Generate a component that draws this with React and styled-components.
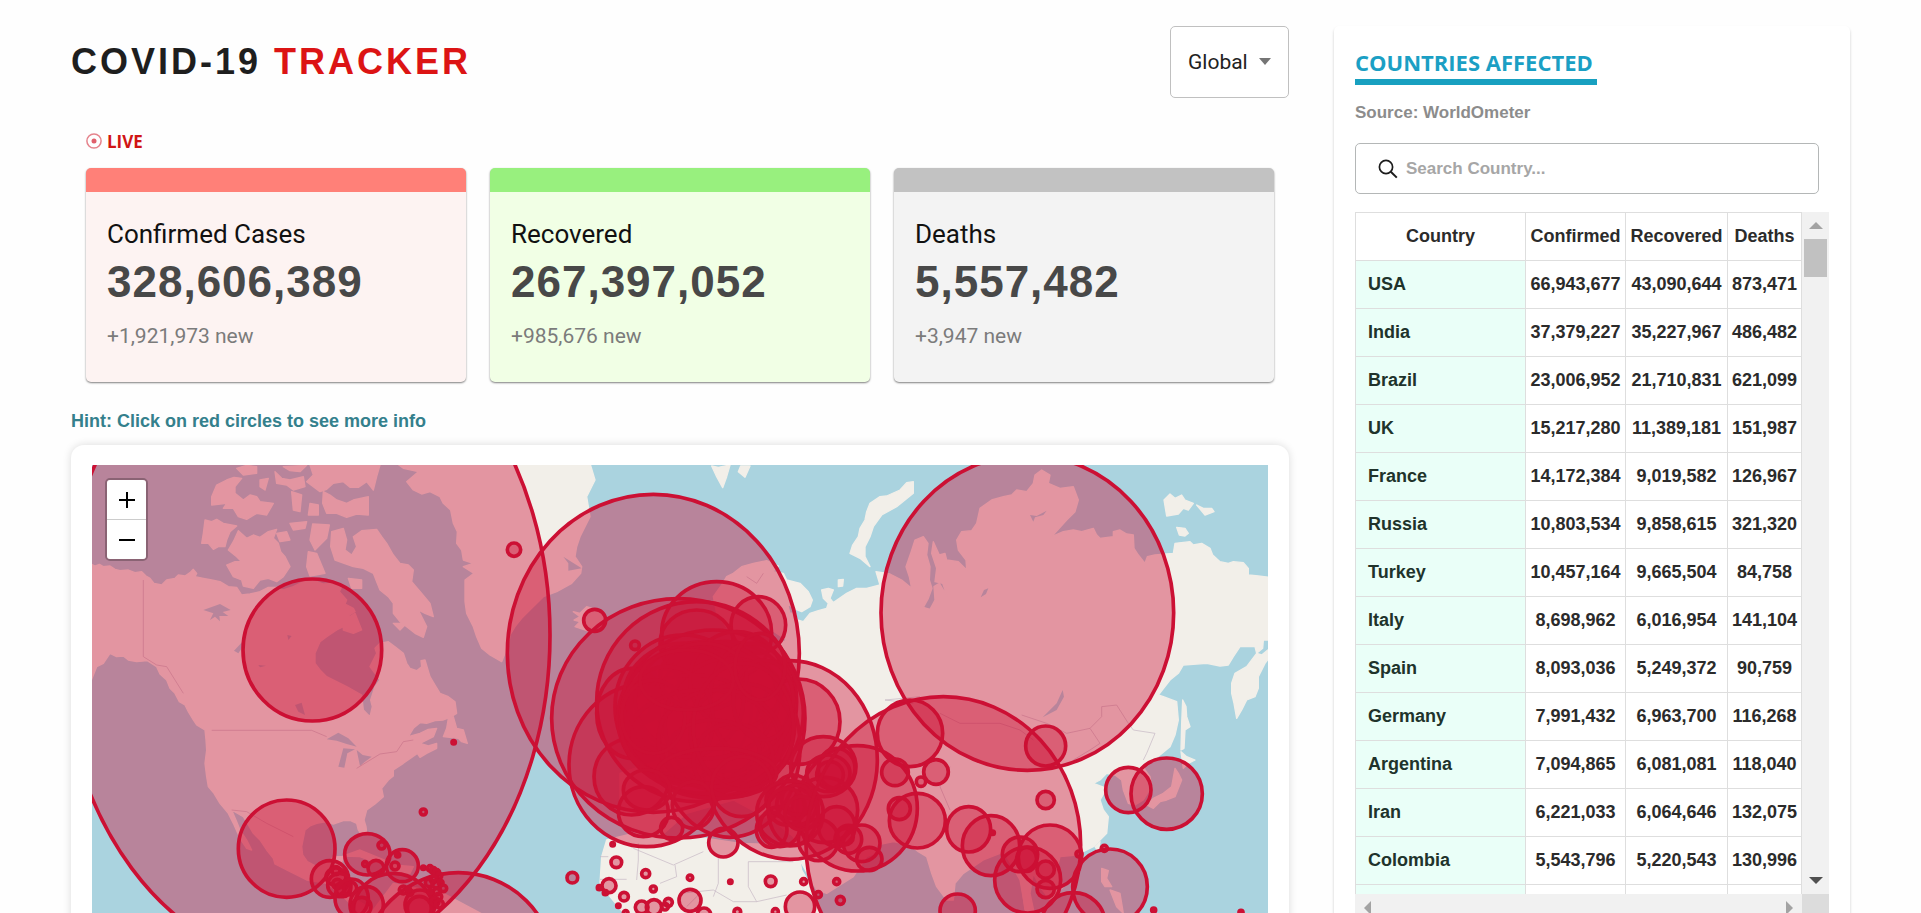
import React, { useState } from "react";
import styled, { createGlobalStyle } from "styled-components";

const GlobalStyle = createGlobalStyle`
  * { box-sizing: border-box; }
  body {
    margin: 0;
    background: #fefefe;
    color: #222;
    font-family: "Liberation Sans", Arial, sans-serif;
  }
  h1, h2, h3, p { margin: 0; }
`;

const Page = styled.div`
  display: flex;
  gap: 45px;
  height: 100vh;
  overflow: hidden;
  padding: 26px 71px 0;
`;

const Main = styled.main`
  flex: 1;
  min-width: 0;
`;

const Header = styled.header`
  display: flex;
  align-items: center;
  justify-content: space-between;
  height: 72px;
`;

const Title = styled.h1`
  font-size: 36px;
  line-height: 40px;
  letter-spacing: 3px;
  color: #1e1e1e;
  span { color: #dc1414; }
`;

const RegionPicker = styled.label`
  position: relative;
  display: block;
  svg {
    position: absolute;
    top: 32px;
    right: 18px;
    pointer-events: none;
  }
`;

const RegionSelect = styled.select`
  appearance: none;
  width: 119px;
  height: 72px;
  padding: 0 17px;
  border: 1px solid #c0c0c0;
  border-radius: 5px;
  background: #fff;
  color: #222;
  font: 21px/24px Roboto, sans-serif;
`;

const Live = styled.div`
  display: flex;
  align-items: center;
  gap: 5px;
  height: 24px;
  margin: 32px 15px 14px;
  color: #d01515;
  font: bold 17px/24px "Open Sans", sans-serif;
`;

const Cards = styled.div`
  display: grid;
  grid-template-columns: repeat(3, 1fr);
  gap: 24px;
  padding: 0 15px;
`;

const Card = styled.section`
  height: 214px;
  padding: 24px 21px 0;
  border-top: 24px solid ${(p) => p.$accent};
  border-radius: 5px;
  background: ${(p) => p.$tint};
  box-shadow: 0 1px 2px rgba(0, 0, 0, 0.5);
`;

const CardTitle = styled.h2`
  font: 400 26px/36px Roboto, sans-serif;
  color: #111;
`;

const CardValue = styled.p`
  font-size: 44px;
  font-weight: bold;
  line-height: 60px;
  letter-spacing: 1px;
  color: #484848;
`;

const CardDelta = styled.p`
  margin-top: 12px;
  font: 21px/24px Roboto, sans-serif;
  color: #7b7b7b;
`;

const Hint = styled.p`
  margin: 28px 0 13px;
  font-size: 18px;
  font-weight: bold;
  line-height: 22px;
  color: #34808c;
`;

const MapCard = styled.section`
  height: 620px;
  padding: 20px 21px;
  border-radius: 13px;
  background: #fff;
  box-shadow: 0 0 8px rgba(0, 0, 0, 0.14);
`;

const MapFrame = styled.div`
  position: relative;
  height: 100%;
  overflow: hidden;
  background: #aad3df;
`;

const WorldSvg = styled.svg`
  display: block;
  width: 100%;
  height: 100%;
`;

const ZoomControl = styled.div`
  position: absolute;
  top: 13px;
  left: 13px;
  display: flex;
  flex-direction: column;
  border: 2px solid rgba(0, 0, 0, 0.25);
  border-radius: 5px;
  background-clip: padding-box;
`;

const ZoomButton = styled.button`
  display: grid;
  place-items: center;
  width: 39px;
  height: 39px;
  padding: 0;
  border: 0;
  background: #fff;
  &:first-child {
    height: 40px;
    border-bottom: 1px solid #ccc;
    border-radius: 3px 3px 0 0;
  }
  &:last-child { border-radius: 0 0 3px 3px; }
`;

const Sidebar = styled.aside`
  width: 516px;
  flex: none;
  height: 1000px;
  padding: 20px 21px 0;
  border-radius: 5px;
  background: #fff;
  box-shadow: 0 2px 3px rgba(0, 0, 0, 0.2);
`;

const SidebarTitle = styled.h2`
  width: max-content;
  padding-right: 4px;
  border-bottom: 6px solid #18a0c0;
  color: #1b9fc4;
  font: bold 22px/33px "Open Sans", sans-serif;
`;

const Source = styled.p`
  margin: 17px 0 19px;
  color: #8c8c8c;
  font-size: 17px;
  font-weight: bold;
  line-height: 22px;
`;

const SearchBox = styled.label`
  display: flex;
  align-items: center;
  gap: 6px;
  height: 51px;
  margin-right: 10px;
  padding: 0 22px;
  border: 1px solid #b4b7b7;
  border-radius: 5px;
`;

const SearchInput = styled.input`
  flex: 1;
  min-width: 0;
  border: 0;
  outline: 0;
  background: transparent;
  color: #222;
  font: bold 17px/24px "Liberation Sans", Arial, sans-serif;
  &::placeholder { color: #a6a6a6; }
`;

const ScrollArea = styled.div`
  display: grid;
  grid-template-columns: 1fr 27px;
  grid-template-rows: 682px 27px;
  margin-top: 18px;
`;

const TableViewport = styled.div`
  overflow: hidden;
`;

const Table = styled.table`
  width: 100%;
  border-collapse: collapse;
  table-layout: fixed;
  color: #2b2b2b;
  font-size: 18px;
  font-weight: bold;
  text-align: center;
  th, td {
    height: 48px;
    padding: 0;
    border: 1px solid #dedede;
  }
`;

const Column = styled.col`
  width: ${(p) => p.$width};
`;

const CountryCell = styled.td`
  && { padding-left: 12px; }
  background: #eafff8;
  color: #20332b;
  text-align: left;
`;

const VerticalBar = styled.div`
  display: flex;
  flex-direction: column;
  padding: 0 1px;
  background: #f1f1f1;
`;

const HorizontalBar = styled.div`
  display: flex;
  justify-content: space-between;
  background: #f1f1f1;
`;

const ScrollButton = styled.button`
  display: grid;
  place-items: center;
  width: 25px;
  height: 27px;
  padding: 0;
  border: 0;
  background: transparent;
  color: ${(p) => (p.$active ? "#505050" : "#a3a3a3")};
`;

const Thumb = styled.div`
  width: 23px;
  height: 38px;
  margin: 0 1px auto;
  background: #c1c1c1;
`;

const Corner = styled.div`
  background: #dcdcdc;
`;

const STATS = [
  { title: "Confirmed Cases", value: "328,606,389", delta: "+1,921,973 new", accent: "#ff8078", tint: "#fdf3f2" },
  { title: "Recovered", value: "267,397,052", delta: "+985,676 new", accent: "#98f07e", tint: "#f1ffe5" },
  { title: "Deaths", value: "5,557,482", delta: "+3,947 new", accent: "#c2c2c2", tint: "#f3f3f3" },
];

const COUNTRIES = [
  ["USA", "66,943,677", "43,090,644", "873,471"],
  ["India", "37,379,227", "35,227,967", "486,482"],
  ["Brazil", "23,006,952", "21,710,831", "621,099"],
  ["UK", "15,217,280", "11,389,181", "151,987"],
  ["France", "14,172,384", "9,019,582", "126,967"],
  ["Russia", "10,803,534", "9,858,615", "321,320"],
  ["Turkey", "10,457,164", "9,665,504", "84,758"],
  ["Italy", "8,698,962", "6,016,954", "141,104"],
  ["Spain", "8,093,036", "5,249,372", "90,759"],
  ["Germany", "7,991,432", "6,963,700", "116,268"],
  ["Argentina", "7,094,865", "6,081,081", "118,040"],
  ["Iran", "6,221,033", "6,064,646", "132,075"],
  ["Colombia", "5,543,796", "5,220,543", "130,996"],
  ["", "", "", ""],
];

// Each map region has its own drawing origin; circles are [cx, cy, rx, ry?].
const AMERICAS = {
  origin: "translate(-96 -195)",
  land: [
    "M90 490 105 498 118 493 130 500 150 498 165 508 180 512 205 510 225 518 245 515 258 528 270 535 282 550 305 555 320 540 345 535 355 525 375 528 390 518 400 508 410 520 405 530 430 535 455 540 480 545 505 560 530 562 545 585 570 582 600 575 625 562 650 562 670 570 700 560 730 545 760 540 790 552 830 550 845 560 838 575 860 600 855 612 880 625 885 635 850 655 850 680 830 690 800 710 780 725 765 760 765 790 780 810 800 830 830 845 860 860 905 885 910 930 930 950 937 920 932 900 945 860 960 840 945 820 930 800 950 760 945 745 960 730 985 725 1005 740 1030 760 1040 790 1050 805 1070 812 1085 800 1083 782 1095 780 1110 830 1125 855 1140 880 1165 890 1185 905 1190 940 1170 952 1150 960 1125 962 1100 970 1080 968 1060 985 1045 1010 1080 1000 1105 988 1130 985 1120 1010 1080 1030 1105 1038 1130 1030 1130 1045 1100 1060 1080 1072 1072 1060 1055 1072 1030 1090 1015 1100 1000 1110 1000 1128 985 1140 965 1165 970 1190 945 1212 920 1230 912 1260 918 1280 920 1298 905 1305 895 1290 890 1270 872 1262 850 1262 820 1272 800 1265 770 1270 750 1278 735 1290 725 1340 728 1365 742 1385 770 1400 800 1390 820 1370 850 1370 835 1420 880 1440 890 1500 940 1530 1000 1450 1150 1480 1300 1560 920 1560 860 1500 800 1450 740 1440 680 1410 645 1392 640 1375 620 1350 600 1320 580 1300 565 1275 550 1250 515 1230 530 1265 540 1290 560 1320 575 1350 560 1345 540 1315 520 1270 505 1240 480 1210 462 1180 445 1160 440 1130 435 1090 440 1050 438 1020 435 990 410 975 400 960 385 935 375 915 358 905 345 880 330 865 320 840 300 822 290 800 262 782 230 785 205 780 190 768 170 770 150 760 140 775 130 790 110 800 90 850Z",
    "M435 360 455 365 470 358 490 370 530 378 510 395 500 420 495 440 475 440 460 448 445 430 425 430 430 400Z",
    "M535 392 560 415 580 405 600 412 625 395 650 388 640 415 655 430 662 455 675 470 690 500 670 530 650 545 625 535 600 540 580 565 550 558 545 540 520 530 500 495 525 485 545 485 530 470 505 450 520 425Z",
    "M455 290 470 255 500 240 522 232 545 235 525 260 525 280 550 300 570 285 590 290 600 305 640 310 620 345 590 340 560 358 535 350 520 325 490 325 500 310 455 315Z",
    "M530 205 560 196 590 200 590 220 550 225ZM600 240 625 235 615 270 600 260ZM645 215 665 235 690 240 730 230 735 260 700 270 680 255 650 250ZM670 200 740 196 720 215 690 212ZM695 275 725 285 720 335 700 330Z",
    "M750 195 960 195 950 230 940 270 920 245 895 262 870 262 850 245 820 250 800 268 780 275 740 245 760 225Z",
    "M790 275 810 285 830 300 860 310 880 300 925 290 925 345 890 342 860 352 830 340 800 340 788 310ZM750 310 775 315 775 345 745 345ZM690 370 740 365 735 385 700 390Z",
    "M650 400 680 395 690 420 660 425ZM758 372 808 375 800 415 765 450 750 420ZM745 455 770 460 795 520 750 528 740 500Z",
    "M815 395 850 385 860 420 855 450 875 465 890 440 880 410 905 392 950 388 965 410 980 430 1000 465 1020 490 1045 495 1060 510 1055 545 1085 580 1110 610 1120 650 1095 640 1075 630 1100 680 1090 712 1065 700 1040 680 1020 665 1000 640 1000 610 985 590 960 570 950 545 940 520 910 505 880 500 825 480 812 440Z",
    "M865 535 905 540 905 565 875 565ZM850 630 870 650 885 640 905 690 880 700 850 690ZM1000 670 1040 670 1020 690ZM1165 955 1180 950 1190 985 1210 990 1222 1030 1205 1025 1195 1015 1150 1010 1160 985Z",
    "M1010 190 1030 205 1075 215 1040 245 1060 270 1085 282 1110 275 1140 290 1150 310 1172 330 1180 370 1192 395 1190 430 1205 450 1210 480 1240 490 1210 500 1242 520 1215 540 1215 570 1215 605 1220 640 1240 680 1250 710 1265 745 1290 765 1325 785 1335 760 1345 740 1350 705 1365 680 1385 655 1400 640 1450 590 1490 575 1535 550 1562 520 1565 500 1545 470 1550 440 1560 410 1590 350 1580 290 1605 240 1590 190Z",
    "M850 1368 900 1350 985 1385 940 1385 900 1370ZM1000 1395 1060 1400 1050 1420 1000 1415Z",
  ],
  water: [
    "M430 630 480 612 512 630 488 636 505 648 478 648 480 664 465 650 450 660 460 640Z",
    "M800 1018 835 998 865 1015 890 1040 860 1032 830 1022ZM850 1045 835 1100 853 1103 862 1060 885 1048ZM890 1050 908 1065 935 1070 915 1085 900 1098Z",
    "M522 752 560 712 552 735 535 760ZM705 915 725 908 735 945 715 935ZM682 705 695 708 685 720ZM595 795 618 797 600 802Z",
  ],
  borders: "M250 540V770L290 795 320 800 370 880M455 991H755L800 1010M890 1105 960 1062 1010 1055 1030 1025 1060 1020M515 1230 560 1235 620 1270 700 1310",
  cases: [
    [735, 705, 735, 990], [757, 750, 208, 213], [680, 1346, 145, 146], [1362, 449, 20], [1181, 1027, 5], [1090, 1236, 9],
    [922, 1363, 68, 62], [965, 1336, 11], [1027, 1397, 48], [1013, 1365, 6], [1005, 1398, 12], [948, 1405, 24], [915, 1392, 7],
    [810, 1437, 56, 55], [828, 1412, 12], [828, 1430, 30, 26], [838, 1455, 35], [850, 1468, 22], [870, 1465, 20], [832, 1452, 14],
    [875, 1495, 50, 58], [920, 1515, 50, 55], [1195, 1707, 289], [1000, 1535, 120, 115], [905, 1520, 28], [1080, 1515, 45], [1078, 1525, 36],
    [1090, 1403, 5], [1110, 1405, 8], [1120, 1412, 9], [1130, 1418, 9], [1137, 1428, 8], [1120, 1438, 10], [1108, 1448, 12], [1128, 1452, 12],
    [1142, 1448, 7], [1150, 1465, 10], [1130, 1475, 10], [1135, 1490, 10], [1125, 1505, 12], [1110, 1475, 6], [1138, 1512, 12],
    [1030, 1470, 12], [1050, 1478, 8], [1045, 1468, 6],
  ],
};

const EUROPE = {
  origin: "translate(1224 -75)",
  land: [
    "M220 515 240 520 260 500 290 510 320 540 300 560 270 575 225 560 240 545 222 540 240 530ZM635 78 655 82 690 75 680 110 668 143 650 110ZM715 95 722 78 750 78 735 112Z",
    "M1200 150 1160 168 1140 170 1110 190 1100 215 1095 240 1080 265 1075 290 1058 315 1050 340 1080 355 1110 380 1095 350 1095 320 1110 290 1120 260 1145 225 1190 200 1240 160 1240 125 1220 128Z",
    "M640 470 665 435 680 410 700 400 725 380 760 370 800 362 835 378 818 395 850 400 860 420 900 430 925 455 937 480 930 500 905 515 880 505 862 490 870 520 885 518 892 540 910 545 930 520 955 512 980 505 985 490 970 475 965 450 985 445 1000 450 990 475 1000 488 1040 460 1070 445 1100 445 1140 435 1128 395 1170 402 1205 420 1235 445 1228 410 1218 380 1232 340 1245 300 1270 290 1284 310 1280 345 1290 380 1288 420 1296 445 1285 475 1270 502 1290 508 1305 480 1302 440 1318 430 1342 470 1328 430 1305 425 1310 385 1295 340 1300 305 1318 345 1335 340 1340 360 1375 365 1400 390 1398 360 1375 330 1370 300 1385 275 1415 272 1430 250 1440 205 1475 180 1510 170 1535 165 1550 150 1580 155 1600 130 1605 105 1625 90 1650 105 1645 130 1680 145 1720 140 1735 180 1725 215 1700 240 1655 290 1690 275 1720 270 1745 275 1780 265 1790 285 1800 295 1840 290 1840 275 1860 270 1880 282 1900 285 1902 325 1915 345 1935 370 1942 350 1965 345 2020 340 2025 310 2070 305 2080 315 2105 310 2130 325 2138 345 2160 365 2185 370 2200 365 2230 368 2245 385 2245 405 2275 408 2310 412V600L2290 600 2288 625 2270 640 2265 620 2220 620 2200 650 2185 675 2160 678 2120 670 2050 675 2035 700 2010 720 1975 765 1990 770 2030 785 2035 840 2025 885 2010 920 1980 945 1950 965 1930 975 1935 990 1950 1010 1955 1040 1930 1080 1905 1095 1885 1090 1870 1050 1865 1020 1845 1005 1820 1000 1800 1020 1780 1030 1820 1045 1800 1080 1810 1110 1825 1130 1820 1180 1780 1220 1730 1245 1680 1250 1670 1290 1690 1340 1650 1380 1620 1340 1600 1300 1590 1360 1605 1430H1580L1560 1320 1520 1250 1500 1240 1450 1260 1390 1300 1365 1330 1360 1380 1340 1380 1310 1340 1295 1300 1280 1250 1255 1235 1230 1215 1180 1205 1130 1215 1125 1240 1100 1250 1060 1310 980 1360 950 1350 905 1270 880 1190 830 1150 700 1080 560 1120 480 1190 360 1150 360 1000 480 960 430 860 560 800 640 700 700 660 780 640 860 600 800 560 720 620 650 520Z",
    "M470 690 520 700 560 820 470 830 490 760ZM410 760 450 760 440 820 400 820Z",
    "M320 1200 400 1180 500 1190 620 1195 720 1210 850 1215 890 1215 905 1290 940 1350 970 1430H380L330 1370 300 1330 305 1250Z",
    "M1015 420 1030 418 1028 438 1015 440Z",
  ],
  water: ["M190 350 245 385 205 392 205 370Z"],
  borders: "M300 1250H325M300 1318H380M415 1210V1260L410 1320M400 1225 520 1275 610 1235M525 1275 530 1310 480 1330M655 1250V1330L640 1370M745 1265V1340M745 1265H880M745 1340 770 1385 860 1365M540 1360 640 1350 700 1385 770 1385M560 1400 600 1360M740 410 770 430 790 400M1155 780 1240 790",
  cases: [
    [460, 640, 438, 477], [535, 835, 380, 359], [590, 785, 300, 300], [440, 975, 233, 245], [395, 1010, 113, 115], [395, 820, 105, 135],
    [650, 580, 165, 155], [775, 555, 82, 85], [590, 610, 110, 100], [284, 541, 33], [405, 616, 13],
    [870, 960, 262, 298], [895, 845, 125, 128], [1072, 1105, 180, 188], [640, 820, 270, 250], [690, 920, 210, 272], [550, 800, 205, 215],
    [615, 835, 262, 225], [680, 800, 205, 195], [690, 850, 195, 195], [580, 870, 215, 165], [620, 780, 215, 175], [710, 720, 140, 145],
    [725, 880, 155, 150], [610, 890, 225, 140], [550, 780, 180, 170], [660, 900, 185, 150], [755, 780, 125, 170], [610, 710, 130, 100],
    [500, 840, 140, 160], [700, 960, 120, 110], [790, 780, 90, 120], [640, 940, 140, 100], [460, 830, 95, 110], [730, 860, 150, 190],
    [560, 720, 140, 90], [780, 680, 75, 100], [650, 1000, 180, 75],
    [430, 1115, 75, 75], [515, 1165, 33], [580, 1095, 63, 70], [440, 1050, 70, 60], [725, 1040, 90, 90],
    [970, 980, 98, 90], [1010, 985, 55, 60], [990, 1005, 40], [985, 1000, 65, 55], [975, 1110, 98], [1010, 1160, 55, 60], [1045, 1198, 40, 42],
    [1085, 1210, 55], [1108, 1257, 38, 35], [1035, 1190, 25], [955, 1200, 60, 62],
    [870, 1080, 72, 55], [880, 1110, 75, 105], [870, 1120, 100, 98], [815, 1170, 46, 52], [840, 1160, 60], [890, 1095, 60], [890, 1080, 45],
    [860, 1100, 55], [905, 1120, 50], [670, 1208, 44, 43],
    [338, 1213, 5], [349, 1267, 16], [217, 1313, 16], [437, 1301, 12], [570, 1313, 8], [691, 1325, 5], [812, 1324, 16], [911, 1325, 9],
    [1010, 1325, 9], [1021, 1381, 12], [955, 1364, 9], [460, 1347, 9], [327, 1337, 21], [298, 1343, 6], [316, 1358, 6], [372, 1370, 13],
    [355, 1397, 5], [570, 1381, 33], [425, 1402, 19], [462, 1402, 23], [505, 1387, 12], [495, 1400, 10], [612, 1424, 20], [900, 1400, 44],
    [712, 1415, 10], [826, 1415, 9], [377, 1419, 7],
  ],
};

const ASIA = {
  origin: "translate(2304 -75)",
  land: [
    "M912 180 930 162 945 175 965 165 975 180 1000 190 985 210 970 205 955 222 920 228ZM1010 195 1030 205 1055 205 1062 215 1035 225ZM950 262 975 265 985 280 975 288 958 285Z",
    "M1230 625 1205 645 1190 640 1160 680 1125 700 1115 730 1115 760 1122 790 1130 835 1145 810 1160 780 1185 770 1195 745 1195 710 1215 670 1230 650ZM968 780 978 800 980 830 990 860 975 870 972 925 963 930 965 850Z",
    "M963 935 980 950 1005 960 985 970 970 985ZM945 985 955 1000 965 1020 945 1070 920 1080 900 1085 880 1105 860 1095 880 1075 910 1060 935 1040Z",
    "M725 1285 745 1292 740 1315 755 1340 735 1340 725 1325ZM750 1350 780 1360 790 1420 770 1400ZM480 1300 500 1310 515 1410 495 1410ZM705 1220 720 1205 715 1235Z",
  ],
  water: ["M608 750 612 770 590 810 548 832 590 790ZM510 225 530 228 560 212 550 225 525 232 520 245ZM362 472 372 450 385 445 378 462Z"],
  borders: "M240 820 300 850 350 850 420 850 480 870 520 900M485 825 560 850 620 880 690 865 720 910 690 930 640 960M690 865 725 830V800L770 795 805 850 820 870 885 880 860 940 850 960M270 980 240 1040 270 1110M75 780 180 770",
  cases: [
    [250, 1215, 412, 445], [502, 518, 439, 473], [150, 880, 98, 100], [557, 918, 60], [105, 997, 40], [228, 996, 37],
    [183, 1025, 14], [557, 1080, 26], [172, 1142, 84, 82], [118, 1106, 33], [326, 1168, 66, 68], [393, 1217, 86, 90], [398, 1178, 5],
    [570, 1250, 95, 95], [480, 1243, 53, 52], [500, 1258, 30, 36], [503, 1320, 99], [557, 1289, 26], [557, 1347, 26], [293, 1412, 53, 50],
    [750, 1340, 112, 113], [733, 1225, 9], [657, 1242, 9], [640, 1450, 95, 92], [805, 1050, 68], [920, 1061, 107], [881, 1410, 6], [1143, 1417, 6],
  ],
};

const REGIONS = [AMERICAS, EUROPE, ASIA];

function WorldMap() {
  return (
    <WorldSvg viewBox="0 0 3528 1740" preserveAspectRatio="xMinYMin slice" role="img" aria-label="Cases by country">
      {REGIONS.map((r) => (
        <g key={r.origin} transform={r.origin}>
          <g fill="#f2efe9" stroke="#f2efe9" strokeWidth="4" strokeLinejoin="round">
            {r.land.map((d) => <path key={d} d={d} />)}
          </g>
          <g fill="#aad3df">{r.water.map((d) => <path key={d} d={d} />)}</g>
          <path d={r.borders} fill="none" stroke="#c4b5c2" strokeWidth="2" />
        </g>
      ))}
      {REGIONS.map((r) => (
        <g key={r.origin} transform={r.origin} fill="#cc1034" fillOpacity=".4" stroke="#cc1034" strokeWidth="11">
          {r.cases.map(([cx, cy, rx, ry = rx], i) => <ellipse key={i} cx={cx} cy={cy} rx={rx} ry={ry} />)}
        </g>
      ))}
    </WorldSvg>
  );
}

const ARROWS = { up: "M0 9 9 0 18 9Z", down: "M0 0 9 9 18 0Z", left: "M9 0 0 9 9 18Z", right: "M0 0 9 9 0 18Z" };

function Arrow({ dir }) {
  const tall = dir === "left" || dir === "right";
  return (
    <svg width={tall ? 7 : 14} height={tall ? 14 : 7} viewBox={tall ? "0 0 9 18" : "0 0 18 9"} aria-hidden="true">
      <path d={ARROWS[dir]} fill="currentColor" />
    </svg>
  );
}

export default function App() {
  const [query, setQuery] = useState("");
  const rows = COUNTRIES.filter(([name]) => name.toLowerCase().includes(query.toLowerCase()));

  return (
    <>
      <GlobalStyle />
      <Page>
        <Main>
          <Header>
            <Title>COVID-19 <span>TRACKER</span></Title>
            <RegionPicker>
              <RegionSelect aria-label="Region" defaultValue="Global">
                <option>Global</option>
              </RegionSelect>
              <svg width="12" height="7" viewBox="0 0 12 7" aria-hidden="true"><path d="M0 0h12L6 7z" fill="#757575" /></svg>
            </RegionPicker>
          </Header>

          <Live>
            <svg width="16" height="18" viewBox="0 0 16 18" aria-hidden="true">
              <circle cx="8" cy="8" r="7.1" fill="none" stroke="#e5838c" strokeWidth="1.5" />
              <circle cx="8" cy="8" r="2.5" fill="#e0606c" />
            </svg>
            LIVE
          </Live>

          <Cards>
            {STATS.map((s) => (
              <Card key={s.title} $accent={s.accent} $tint={s.tint}>
                <CardTitle>{s.title}</CardTitle>
                <CardValue>{s.value}</CardValue>
                <CardDelta>{s.delta}</CardDelta>
              </Card>
            ))}
          </Cards>

          <Hint>Hint: Click on red circles to see more info</Hint>

          <MapCard>
            <MapFrame>
              <WorldMap />
              <ZoomControl>
                <ZoomButton aria-label="Zoom in">
                  <svg width="16" height="16" viewBox="0 0 16 16"><path d="M0 8h16M8 0v16" stroke="#000" strokeWidth="2" /></svg>
                </ZoomButton>
                <ZoomButton aria-label="Zoom out">
                  <svg width="16" height="16" viewBox="0 0 16 16"><path d="M0 8h16" stroke="#000" strokeWidth="2" /></svg>
                </ZoomButton>
              </ZoomControl>
            </MapFrame>
          </MapCard>
        </Main>

        <Sidebar>
          <SidebarTitle>COUNTRIES AFFECTED</SidebarTitle>
          <Source>Source: WorldOmeter</Source>
          <SearchBox>
            <svg width="20" height="20" viewBox="0 0 20 20" aria-hidden="true">
              <circle cx="8" cy="8" r="6.6" fill="none" stroke="#1c1c1c" strokeWidth="1.7" />
              <path d="m12.8 12.8 6 5.8" stroke="#1c1c1c" strokeWidth="2" />
            </svg>
            <SearchInput aria-label="Search Country" placeholder="Search Country..." value={query} onChange={(e) => setQuery(e.target.value)} />
          </SearchBox>

          <ScrollArea>
            <TableViewport>
              <Table>
                <colgroup>
                  <Column $width="auto" />
                  <Column $width="100px" />
                  <Column $width="102px" />
                  <Column $width="74px" />
                </colgroup>
                <thead>
                  <tr><th>Country</th><th>Confirmed</th><th>Recovered</th><th>Deaths</th></tr>
                </thead>
                <tbody>
                  {rows.map(([name, confirmed, recovered, deaths]) => (
                    <tr key={name}>
                      <CountryCell>{name}</CountryCell>
                      <td>{confirmed}</td>
                      <td>{recovered}</td>
                      <td>{deaths}</td>
                    </tr>
                  ))}
                </tbody>
              </Table>
            </TableViewport>
            <VerticalBar>
              <ScrollButton aria-label="Scroll up"><Arrow dir="up" /></ScrollButton>
              <Thumb />
              <ScrollButton $active aria-label="Scroll down"><Arrow dir="down" /></ScrollButton>
            </VerticalBar>
            <HorizontalBar>
              <ScrollButton aria-label="Scroll left"><Arrow dir="left" /></ScrollButton>
              <ScrollButton aria-label="Scroll right"><Arrow dir="right" /></ScrollButton>
            </HorizontalBar>
            <Corner />
          </ScrollArea>
        </Sidebar>
      </Page>
    </>
  );
}
